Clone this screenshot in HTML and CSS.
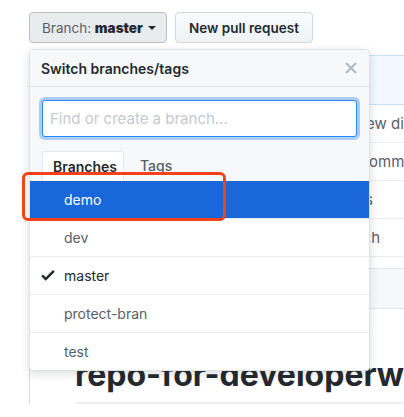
FILE: index.html
```html
<!DOCTYPE html>
<html>
<head>
<meta charset="utf-8">
<link rel="stylesheet" href="styles.css">
</head>
<body>
<div class="page">
  <div class="toolbar">
    <div class="branch-select">
      <button class="btn btn-selected"><span class="btn-label">Branch: </span><b>master</b><span class="caret"></span></button>
      <div class="dropdown">
        <div class="dd-header">
          <span class="dd-title">Switch branches/tags</span>
          <svg class="dd-close" width="12" height="12" viewBox="0 0 12 12"><path d="M1 1L11 11M11 1L1 11" stroke="#b0b6bc" stroke-width="1.8" fill="none"/></svg>
        </div>
        <div class="dd-filter">
          <div class="dd-input">Find or create a branch…</div>
          <div class="dd-tabs">
            <span class="tab tab-active">Branches</span>
            <span class="tab">Tags</span>
          </div>
        </div>
        <ul class="dd-list">
          <li class="item item-active">demo</li>
          <li class="item">dev</li>
          <li class="item item-current"><svg class="check" width="14" height="18" viewBox="0 0 12 16"><path d="M12 5l-8 8-4-4 1.5-1.5L4 10l6.5-6.5L12 5z" fill="#24292e"/></svg>master</li>
          <li class="item">protect-bran</li>
          <li class="item">test</li>
        </ul>
      </div>
    </div>
    <button class="btn">New pull request</button>
  </div>

  <div class="files">
    <div class="files-head"></div>
    <div class="file-row"><span class="msg msg-1">Create n</span>ew directory</div>
    <div class="file-row"><span class="msg msg-2">Initial c</span>ommit message</div>
    <div class="file-row"><span class="msg msg-3">Add docs</span></div>
    <div class="file-row"><span class="msg msg-4">Create branch</span></div>
  </div>

  <div class="readme">
    <div class="readme-head"></div>
    <div class="readme-body">
      <h1 class="readme-title">repo-for-developerworks</h1>
    </div>
  </div>
</div>
<div class="annotation"></div>
</body>
</html>
```

FILE: styles.css
```css
html, body {
  margin: 0;
  padding: 0;
  background: #fff;
  overflow: hidden;
  height: 417px;
}
body {
  font-family: Inter, "Liberation Sans", sans-serif;
  font-size: 14px;
  color: #24292e;
  position: relative;
}
.page {
  padding: 12px 0 0 29px;
  width: 800px;
}
.toolbar {
  display: flex;
  gap: 8px;
  height: 31px;
}
.branch-select {
  position: relative;
}
.btn {
  box-sizing: border-box;
  height: 31px;
  width: 138px;
  padding: 0 12px;
  font-family: inherit;
  font-size: 13.5px;
  font-weight: 600;
  color: #24292e;
  white-space: nowrap;
  background: linear-gradient(#fafbfc, #eff3f6 90%);
  border: 1px solid #d1d5da;
  border-radius: 4px;
  display: flex;
  align-items: center;
  justify-content: center;
}
.btn-selected {
  justify-content: flex-start;
  background: #e9ecef;
  border-color: #b8bec4;
}
.btn-label {
  color: #586069;
  font-weight: 400;
  white-space: pre;
}
.caret {
  display: inline-block;
  width: 0;
  height: 0;
  margin-left: 5px;
  border-top: 4px solid #24292e;
  border-left: 4px solid transparent;
  border-right: 4px solid transparent;
}
.dropdown {
  position: absolute;
  top: 37px;
  left: 0;
  width: 341px;
  box-sizing: border-box;
  background: #fff;
  border: 1px solid #dfe2e5;
  border-radius: 4px;
  box-shadow: 0 3px 10px rgba(27, 31, 35, 0.15);
  z-index: 5;
  overflow: hidden;
}
.dd-header {
  height: 36px;
  background: #f6f8fa;
  border-bottom: 1px solid #e1e4e8;
  display: flex;
  align-items: center;
  justify-content: space-between;
  padding: 0 12px 0 11px;
}
.dd-title {
  font-weight: 600;
  font-size: 14px;
}
.dd-close {
  display: block;
}
.dd-filter {
  background: #f6f8fa;
  padding: 13px 12px 0 12px;
}
.dd-input {
  box-sizing: border-box;
  height: 37px;
  border: 1px solid #2188ff;
  border-radius: 3px;
  background: #fff;
  box-shadow: 0 0 0 3px rgba(3, 102, 214, 0.3);
  color: #c4c9ce;
  font-size: 15px;
  line-height: 35px;
  padding-left: 7px;
}
.dd-tabs {
  display: flex;
  margin-top: 14px;
  height: 30px;
}
.tab {
  box-sizing: border-box;
  height: 30px;
  line-height: 30px;
  padding: 0 16px 0 10px;
  color: #586069;
  font-weight: 500;
  font-size: 14px;
}
.tab-active {
  background: #fff;
  border: 1px solid #e1e4e8;
  border-bottom: none;
  border-radius: 3px 3px 0 0;
  color: #24292e;
  font-weight: 600;
  width: 82px;
  line-height: 29px;
  margin-right: 6px;
}
.dd-list {
  list-style: none;
  margin: 0;
  padding: 0;
}
.item {
  height: 37px;
  line-height: 37px;
  padding-left: 34px;
  color: #586069;
  border-top: 1px solid #eaecef;
  position: relative;
  font-size: 14px;
}
.item-active {
  border-top: none;
  background: #1967d8;
  color: #fff;
}
.item-current {
  color: #24292e;
}
.check {
  position: absolute;
  left: 11px;
  top: 9px;
}
.files {
  margin-top: 12px;
  border-left: 1px solid #e1e4e8;
}
.files-head {
  height: 48px;
  background: #f1f8ff;
  border-top: 1px solid #c8e1ff;
  border-bottom: 1px solid #c8e1ff;
}
.file-row {
  height: 37px;
  border-bottom: 1px solid #eaecef;
  line-height: 37px;
  font-size: 15px;
  color: #586069;
  white-space: nowrap;
}
.msg {
  display: inline-block;
  text-align: right;
}
.msg-1 { width: 336px; }
.msg-2 { width: 339px; }
.msg-3 { width: 343px; }
.msg-4 { width: 350px; }
.readme {
  margin-top: 11px;
  border-left: 1px solid #d8dbdf;
}
.readme-head {
  height: 39px;
  background: #f6f8fa;
  border-top: 1px solid #e1e4e8;
  border-bottom: 1px solid #e1e4e8;
}
.readme-body {
  padding: 46px 0 0 45px;
}
.readme-title {
  margin: 0;
  font-size: 32px;
  font-weight: 700;
  line-height: 1.25;
  white-space: nowrap;
  padding-bottom: 7px;
  border-bottom: 2px solid #eef0f2;
}
.annotation {
  position: absolute;
  left: 22px;
  top: 172px;
  width: 204px;
  height: 49px;
  box-sizing: border-box;
  border: 3px solid #f5421c;
  border-radius: 6px;
  z-index: 10;
}
```
